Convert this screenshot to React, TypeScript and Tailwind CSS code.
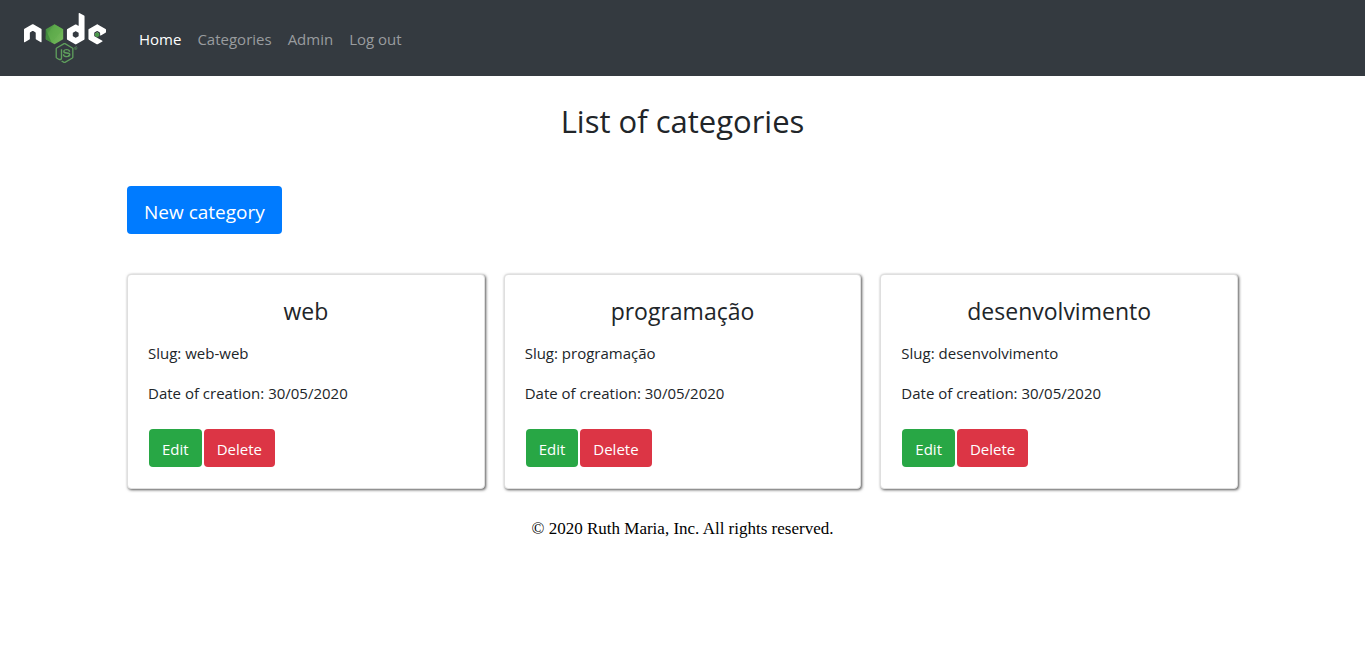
import { FaNode } from "react-icons/fa";

type Category = { name: string; slug: string; created: string };

const categories: Category[] = [
  { name: "web", slug: "web-web", created: "30/05/2020" },
  { name: "programação", slug: "programação", created: "30/05/2020" },
  { name: "desenvolvimento", slug: "desenvolvimento", created: "30/05/2020" },
];

const links = ["Home", "Categories", "Admin", "Log out"];

function Logo() {
  return (
    <svg viewBox="0 56 640 400" className="h-[52px] w-[82px]" role="img" aria-label="Node.js">
      <defs>
        <clipPath id="word">
          <path d="M0 0H160V320H0ZM322 0H640V330H420L322 278Z" />
        </clipPath>
        <clipPath id="badge">
          <path d="M220 326L316 276L420 328V512H220Z" />
        </clipPath>
        <linearGradient id="leaf" x1="0" y1="0" x2="1" y2="0.6">
          <stop offset="0" stopColor="#3f873f" />
          <stop offset="0.5" stopColor="#5faa4c" />
          <stop offset="1" stopColor="#72b85a" />
        </linearGradient>
      </defs>
      <g clipPath="url(#word)">
        <FaNode size={640} y={-64} color="#ffffff" />
      </g>
      <path d="M238 148L306 187V265L238 304L170 265V187Z" fill="url(#leaf)" />
      <path d="M238 148L306 187L214 290L170 265V240Z" fill="#5fae4c" opacity="0.5" />
      <path d="M170 187L214 290L170 265Z" fill="#367c38" opacity="0.6" />
      <path d="M571 211L588 220V240L571 250L554 240V220Z" fill="#4c9a4c" />
      <g clipPath="url(#badge)">
        <FaNode size={640} y={-64} color="#5f9f5c" />
      </g>
      <circle cx="398" cy="337" r="8" fill="none" stroke="#5f9f5c" strokeWidth="4" opacity="0.7" />
    </svg>
  );
}

function CategoryCard({ name, slug, created }: Category) {
  return (
    <article className="rounded border border-[#dfdfdf] bg-white p-5 shadow-[1px_1px_3px_#555]">
      <h2 className="mt-0.5 mb-4 text-center text-[23px] leading-7">{name}</h2>
      <p className="mb-4 leading-6">Slug: {slug}</p>
      <p className="mb-6 leading-6">Date of creation: {created}</p>
      <div className="flex gap-0.5 px-px pb-px">
        <button type="button" className="h-[38px] rounded bg-[#28a745] px-[13px] pt-0.5 text-white">
          Edit
        </button>
        <button type="button" className="h-[38px] rounded bg-[#dc3545] px-[13px] pt-0.5 text-white">
          Delete
        </button>
      </div>
    </article>
  );
}

export default function App() {
  return (
    <div className="bg-white font-['Open_Sans',sans-serif] text-[15px] text-[#212529]">
      <nav className="flex h-[76px] items-center gap-[25px] bg-[#343a40] px-6">
        <a href="#home">
          <Logo />
        </a>
        <ul className="flex pt-0.5">
          {links.map((label, i) => (
            <li key={label}>
              <a href="#" className={i === 0 ? "block p-2 text-white" : "block p-2 text-[#999c9f]"}>
                {label}
              </a>
            </li>
          ))}
        </ul>
      </nav>
      <main className="mx-auto max-w-[1143px] px-4 pt-6">
        <h1 className="text-center text-[31px] leading-[42px]">List of categories</h1>
        <button type="button" className="mt-11 h-12 rounded bg-[#007bff] px-[17px] pt-1 text-[19px] text-white">
          New category
        </button>
        <div className="mt-10 grid gap-[19px] md:grid-cols-3">
          {categories.map((category) => (
            <CategoryCard key={category.slug} {...category} />
          ))}
        </div>
      </main>
      <footer className="py-7 text-center font-['Liberation_Serif',serif] text-[17px] leading-6 text-black">
        © 2020 Ruth Maria, Inc. All rights reserved.
      </footer>
    </div>
  );
}
